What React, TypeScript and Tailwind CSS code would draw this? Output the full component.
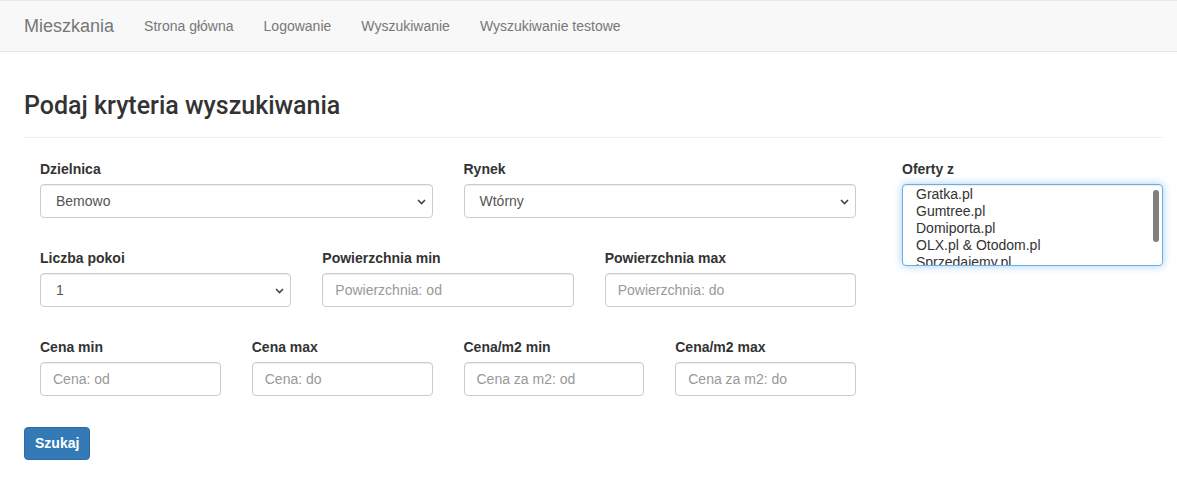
import React from 'react'

const navLinks = ['Strona główna', 'Logowanie', 'Wyszukiwanie', 'Wyszukiwanie testowe']
const sources = ['Gratka.pl', 'Gumtree.pl', 'Domiporta.pl', 'OLX.pl & Otodom.pl', 'Sprzedajemy.pl']

function Label({ children }: { children: React.ReactNode }) {
  return <div className="mb-[5px] h-5 text-[14px] font-bold leading-5 text-[#333]">{children}</div>
}

function Select({ label, value }: { label: string; value: string }) {
  return (
    <div>
      <Label>{label}</Label>
      <div className="relative flex h-[34px] items-center rounded border border-[#ccc] bg-white pl-[15px] text-[14px] text-[#555] shadow-[inset_0_1px_1px_rgba(0,0,0,0.075)]">
        {value}
        <svg className="absolute right-[6px] top-[14px]" width="9" height="6" viewBox="0 0 9 6">
          <path d="M1 1l3.5 3.5L8 1" fill="none" stroke="#444" strokeWidth="1.6" />
        </svg>
      </div>
    </div>
  )
}

function Input({ label, placeholder }: { label: string; placeholder: string }) {
  return (
    <div>
      <Label>{label}</Label>
      <input
        placeholder={placeholder}
        className="block h-[34px] w-full rounded border border-[#ccc] bg-white px-3 text-[14px] text-[#555] placeholder-[#999] shadow-[inset_0_1px_1px_rgba(0,0,0,0.075)] outline-none"
      />
    </div>
  )
}

export default function App() {
  return (
    <div className="min-h-[477px] bg-white font-['Liberation_Sans',Arial,sans-serif]">
      {/* Navbar */}
      <nav className="flex h-[52px] items-center border-y border-[#e7e7e7] bg-[#f8f8f8] pl-[9px]">
        <span className="px-[15px] text-[18px] text-[#777]">Mieszkania</span>
        {navLinks.map((l) => (
          <span key={l} className="px-[15px] text-[14px] text-[#777]">
            {l}
          </span>
        ))}
      </nav>

      <main className="pl-6 pr-[14px]">
        <div className="mt-[41px] border-b border-[#eee] pb-[18px]">
          <h3 className="font-['Roboto',Arial,sans-serif] text-[25px] leading-[26px] font-medium text-[#333]">
            Podaj kryteria wyszukiwania
          </h3>
        </div>

        <div className="mt-[21px] flex pl-4">
          <div className="flex w-[816px] flex-col gap-y-[30px]">
            <div className="grid grid-cols-2 gap-x-[31px]">
              <Select label="Dzielnica" value="Bemowo" />
              <Select label="Rynek" value="Wtórny" />
            </div>
            <div className="grid grid-cols-3 gap-x-[31px]">
              <Select label="Liczba pokoi" value="1" />
              <Input label="Powierzchnia min" placeholder="Powierzchnia: od" />
              <Input label="Powierzchnia max" placeholder="Powierzchnia: do" />
            </div>
            <div className="grid grid-cols-4 gap-x-[31px]">
              <Input label="Cena min" placeholder="Cena: od" />
              <Input label="Cena max" placeholder="Cena: do" />
              <Input label="Cena/m2 min" placeholder="Cena za m2: od" />
              <Input label="Cena/m2 max" placeholder="Cena za m2: do" />
            </div>
          </div>

          <div className="ml-[46px] w-[261px]">
            <Label>Oferty z</Label>
            <div className="relative h-[82px] overflow-hidden rounded border border-[#66afe9] bg-white pl-[13px] pt-px text-[14px] leading-[17px] text-[#333] shadow-[inset_0_1px_1px_rgba(0,0,0,0.075),0_0_8px_rgba(102,175,233,0.6)]">
              {sources.map((s) => (
                <div key={s}>{s}</div>
              ))}
              <div className="absolute right-[3px] top-[5px] h-[52px] w-[6px] rounded-full bg-[#7f7f7f]" />
            </div>
          </div>
        </div>

        <button className="mt-[31px] h-[33px] rounded border border-[#2e6da4] bg-[#337ab7] px-[10px] text-[14px] font-bold text-white">
          Szukaj
        </button>
      </main>
    </div>
  )
}
